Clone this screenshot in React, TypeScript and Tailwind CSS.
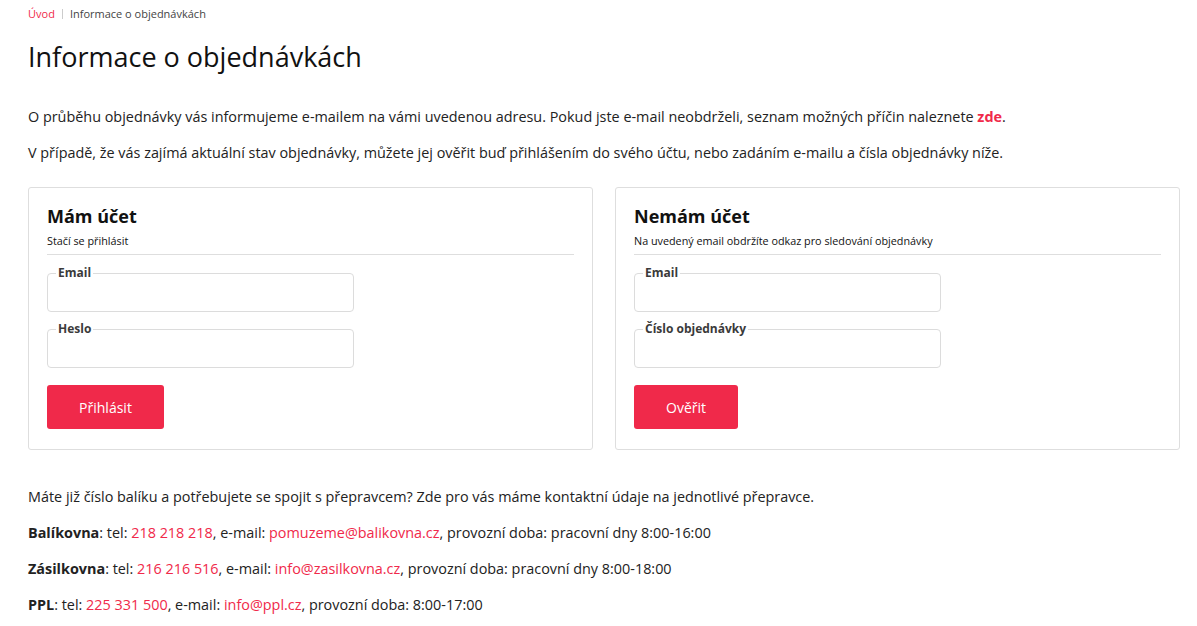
const red = "text-[#f0294a]";

function Field({ label }: { label: string }) {
  return (
    <fieldset className="w-[307px] h-[45px] border border-[#dcdcdc] rounded-[4px] px-[8px]">
      <legend className="px-[2px] text-[12px] font-bold text-[#3a3a3a] leading-[12px]">{label}</legend>
    </fieldset>
  );
}

function Card({
  title,
  subtitle,
  fields,
  button,
  btnWidth,
}: {
  title: string;
  subtitle: string;
  fields: string[];
  button: string;
  btnWidth: string;
}) {
  return (
    <div className="flex-1 border border-[#dedede] rounded-[3px] px-[18px] pt-[16px] pb-[20px]">
      <h2 className="text-[18px] font-bold text-[#111] leading-[24px]">{title}</h2>
      <p className="text-[10.8px] text-[#111] mt-[6px] leading-[14px]">{subtitle}</p>
      <div className="h-px bg-[#dedede] mt-[6px] mb-[12px]" />
      <div className="flex flex-col gap-[11px]">
        {fields.map((f) => (
          <Field key={f} label={f} />
        ))}
      </div>
      <button
        className={`mt-[17px] h-[44px] ${btnWidth} bg-[#f0294a] rounded-[3px] text-white text-[14px]`}
      >
        {button}
      </button>
    </div>
  );
}

export default function App() {
  return (
    <div className="bg-white min-h-screen px-[17px] pl-[28px] text-[#222] font-['Open_Sans',sans-serif]">
      <nav className="pt-[6px] flex items-center text-[11px] leading-[16px]">
        <span className={red}>Úvod</span>
        <span className="mx-[7px] h-[10px] w-px bg-[#ccc]" />
        <span className="text-[#444]">Informace o objednávkách</span>
      </nav>
      <h1 className="mt-[16px] text-[27px] leading-[38px] text-[#111]">Informace o objednávkách</h1>
      <div className="mt-[31px] text-[14.4px] leading-[20px] flex flex-col gap-[16px]">
        <p>
          O průběhu objednávky vás informujeme e-mailem na vámi uvedenou adresu. Pokud jste e-mail
          neobdrželi, seznam možných příčin naleznete <a className={`${red} font-bold`}>zde</a>.
        </p>
        <p>
          V případě, že vás zajímá aktuální stav objednávky, můžete jej ověřit buď přihlášením do
          svého účtu, nebo zadáním e-mailu a čísla objednávky níže.
        </p>
      </div>
      <div className="mt-[24px] flex gap-[22px]">
        <Card
          title="Mám účet"
          subtitle="Stačí se přihlásit"
          fields={["Email", "Heslo"]}
          button="Přihlásit"
          btnWidth="w-[117px]"
        />
        <Card
          title="Nemám účet"
          subtitle="Na uvedený email obdržíte odkaz pro sledování objednávky"
          fields={["Email", "Číslo objednávky"]}
          button="Ověřit"
          btnWidth="w-[104px]"
        />
      </div>
      <div className="mt-[37px] text-[14.4px] leading-[20px] flex flex-col gap-[16px]">
        <p>Máte již číslo balíku a potřebujete se spojit s přepravcem? Zde pro vás máme kontaktní údaje na jednotlivé přepravce.</p>
        <p>
          <b>Balíkovna</b>: tel: <span className={red}>218 218 218</span>, e-mail:{" "}
          <span className={red}>pomuzeme@balikovna.cz</span>, provozní doba: pracovní dny 8:00-16:00
        </p>
        <p>
          <b>Zásilkovna</b>: tel: <span className={red}>216 216 516</span>, e-mail:{" "}
          <span className={red}>info@zasilkovna.cz</span>, provozní doba: pracovní dny 8:00-18:00
        </p>
        <p>
          <b>PPL</b>: tel: <span className={red}>225 331 500</span>, e-mail:{" "}
          <span className={red}>info@ppl.cz</span>, provozní doba: 8:00-17:00
        </p>
      </div>
    </div>
  );
}
